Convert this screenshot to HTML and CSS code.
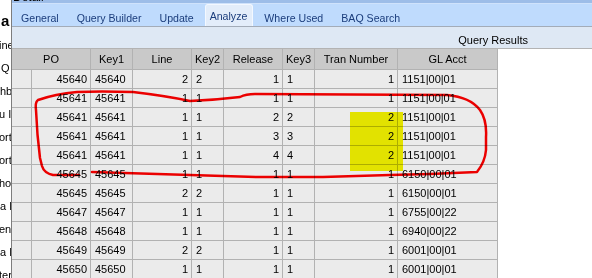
FILE: index.html
```html
<!DOCTYPE html>
<html>
<head>
<meta charset="utf-8">
<link rel="stylesheet" href="styles.css">
</head>
<body>
<div class="screen">
  <div class="behind">
    <div class="behind-title">a</div>
    <div class="behind-lines">
      <div class="shift">ine</div><div class="tight">Q R</div><div>hb</div><div class="shift">u I</div><div class="shift">ort</div><div class="shift">ort</div><div class="shift">hoi</div><div>a D</div><div class="shift">enc</div><div>a D</div><div class="shift">ter</div>
    </div>
  </div>
  <div class="panel">
    <div class="titlebar"><div class="title-text">Detail</div></div>
    <div class="tabbar">
      <div class="tab">General</div>
      <div class="tab">Query Builder</div>
      <div class="tab">Update</div>
      <div class="tab active">Analyze</div>
      <div class="tab">Where Used</div>
      <div class="tab">BAQ Search</div>
    </div>
    <div class="strip">Query Results</div>
    <div class="grid">
      <div class="hc span2">PO</div><div class="hc">Key1</div><div class="hc">Line</div><div class="hc">Key2</div><div class="hc">Release</div><div class="hc">Key3</div><div class="hc">Tran Number</div><div class="hc">GL Acct</div>

      <div class="c"></div><div class="c r">45640</div><div class="c l">45640</div><div class="c r">2</div><div class="c l">2</div><div class="c r">1</div><div class="c l">1</div><div class="c r">1</div><div class="c l">1151|00|01</div>
      <div class="c"></div><div class="c r">45641</div><div class="c l">45641</div><div class="c r">1</div><div class="c l">1</div><div class="c r">1</div><div class="c l">1</div><div class="c r">1</div><div class="c l">1151|00|01</div>
      <div class="c"></div><div class="c r">45641</div><div class="c l">45641</div><div class="c r">1</div><div class="c l">1</div><div class="c r">2</div><div class="c l">2</div><div class="c r">2</div><div class="c l">1151|00|01</div>
      <div class="c"></div><div class="c r">45641</div><div class="c l">45641</div><div class="c r">1</div><div class="c l">1</div><div class="c r">3</div><div class="c l">3</div><div class="c r">2</div><div class="c l">1151|00|01</div>
      <div class="c"></div><div class="c r">45641</div><div class="c l">45641</div><div class="c r">1</div><div class="c l">1</div><div class="c r">4</div><div class="c l">4</div><div class="c r">2</div><div class="c l">1151|00|01</div>
      <div class="c"></div><div class="c r">45645</div><div class="c l">45645</div><div class="c r">1</div><div class="c l">1</div><div class="c r">1</div><div class="c l">1</div><div class="c r">1</div><div class="c l">6150|00|01</div>
      <div class="c"></div><div class="c r">45645</div><div class="c l">45645</div><div class="c r">2</div><div class="c l">2</div><div class="c r">1</div><div class="c l">1</div><div class="c r">1</div><div class="c l">6150|00|01</div>
      <div class="c"></div><div class="c r">45647</div><div class="c l">45647</div><div class="c r">1</div><div class="c l">1</div><div class="c r">1</div><div class="c l">1</div><div class="c r">1</div><div class="c l">6755|00|22</div>
      <div class="c"></div><div class="c r">45648</div><div class="c l">45648</div><div class="c r">1</div><div class="c l">1</div><div class="c r">1</div><div class="c l">1</div><div class="c r">1</div><div class="c l">6940|00|22</div>
      <div class="c"></div><div class="c r">45649</div><div class="c l">45649</div><div class="c r">2</div><div class="c l">2</div><div class="c r">1</div><div class="c l">1</div><div class="c r">1</div><div class="c l">6001|00|01</div>
      <div class="c"></div><div class="c r">45650</div><div class="c l">45650</div><div class="c r">1</div><div class="c l">1</div><div class="c r">1</div><div class="c l">1</div><div class="c r">1</div><div class="c l">6001|00|01</div>
    </div>
  </div>
  <svg class="annot" width="592" height="278" viewBox="0 0 592 278">
    <rect x="350" y="112" width="53" height="59" fill="#f6f600"/>
    <path d="M79,175 L53,175 Q44,173 42,166 L40,158 Q37,135 36,110 Q35,102 38,100 Q55,94 77,92 Q100,91 133,92 Q167,96 190,101 Q215,100 240,97 Q246,94 255,94 L447,95 Q470,97 480,110 Q487,120 486,137 L486,150 Q485,162 477,172 L430,174 L390,175 L323,177 L257,177 L190,175 L92,172" fill="none" stroke="#ff0000" stroke-width="2.5" stroke-linecap="round" stroke-linejoin="round"/>
  </svg>
</div>
</body>
</html>
```
FILE: styles.css
```css
html, body {
  margin: 0;
  padding: 0;
  background: #ffffff;
}
body {
  font-family: "Liberation Sans", Arial, sans-serif;
  font-size: 11px;
  color: #000;
}
.screen {
  position: relative;
  display: flex;
  width: 592px;
  height: 278px;
  overflow: hidden;
}
.behind {
  flex: none;
  width: 11px;
  border-right: 1px solid #7d7d7d;
  overflow: hidden;
  background: #fff;
  white-space: nowrap;
}
.behind-title {
  box-sizing: border-box;
  height: 34px;
  padding-top: 13px;
  padding-left: 1px;
  font-size: 15px;
  font-weight: bold;
  line-height: 15px;
}
.behind-lines {
  font-size: 11px;
  line-height: 23px;
}
.shift {
  margin-left: -1px;
}
.tight {
  word-spacing: -2px;
  padding-left: 1px;
}
.panel {
  flex: 1;
  display: flex;
  flex-direction: column;
  background: #fff;
  min-width: 0;
}
.titlebar {
  height: 8px;
  background: #9dbde8;
  overflow: hidden;
  padding-left: 1px;
}
.title-text {
  font-size: 12px;
  line-height: 12px;
  margin-top: -9px;
}
.tabbar {
  box-sizing: border-box;
  height: 26px;
  border-top: 1px solid #cfe2fb;
  border-bottom: 1px solid #a3acb8;
  background: #bfdbfd;
  display: flex;
  align-items: flex-end;
  gap: 4px;
  padding-left: 2px;
  font-size: 10.6px;
}
.tab {
  box-sizing: border-box;
  height: 22px;
  padding: 7px 7px 0;
  line-height: 14px;
  color: #1b3d7c;
  white-space: nowrap;
}
.tab.active {
  background: #e3edfa;
  border: 1px solid #f3f8ff;
  border-bottom: none;
  border-radius: 3px 3px 0 0;
  padding: 4px 5px 0 4px;
}
.strip {
  box-sizing: border-box;
  height: 22px;
  background: #dee8f4;
  border-bottom: 1px solid #b3b3b3;
  padding-top: 6px;
  padding-right: 64px;
  line-height: 15px;
  text-align: right;
}
.grid {
  display: grid;
  width: max-content;
  grid-template-columns: 19px 58px 41px 58px 31px 58px 31px 82px 99px;
  grid-template-rows: 20px;
  grid-auto-rows: 18px;
  gap: 1px;
  padding-right: 1px;
  background: #b2b2b2;
}
.hc {
  background: #c9c9c9;
  text-align: center;
  line-height: 19px;
  padding-top: 1px;
  white-space: nowrap;
  overflow: hidden;
}
.span2 {
  grid-column: span 2;
}
.c {
  background: #ebebeb;
  line-height: 18px;
  white-space: nowrap;
  overflow: hidden;
}
.r {
  text-align: right;
  padding-right: 3px;
}
.l {
  text-align: left;
  padding-left: 4px;
}
.annot {
  position: absolute;
  left: 0;
  top: 0;
  pointer-events: none;
  mix-blend-mode: multiply;
}
```
